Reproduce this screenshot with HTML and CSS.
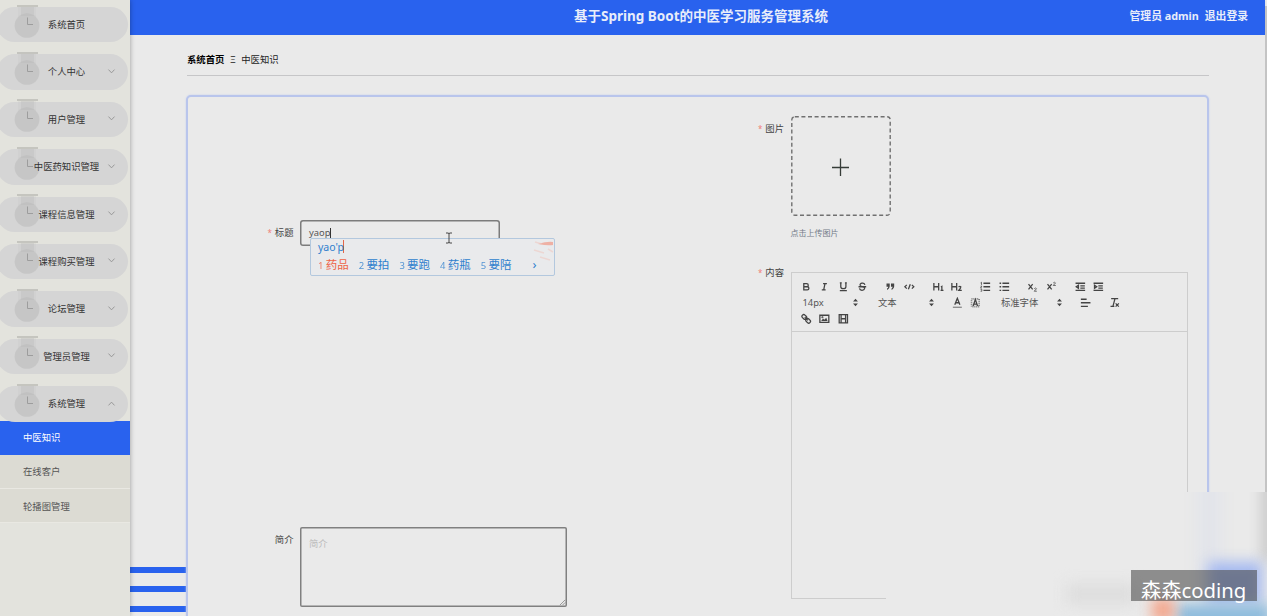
FILE: index.html
```html
<!DOCTYPE html>
<html lang="zh-CN">
<head>
<meta charset="utf-8">
<title>基于Spring Boot的中医学习服务管理系统</title>
<link rel="stylesheet" href="styles.css">
</head>
<body>
<svg class="defs" aria-hidden="true">
  <symbol id="medal" viewBox="0 0 30 36">
    <path d="M6 3H24V14Q29 18 27 25Q25 32 18 33.500H12Q5 31 3 25Q1.500 18 6 14Z" fill="#b5b5b5" opacity=".14"/>
    <path d="M9 3H22V12L9 12Z" fill="#b5b5b5" opacity=".3"/>
    <circle cx="15" cy="21.500" r="12.300" fill="#b5b5b5" opacity=".36"/>
    <path d="M5 2H26" stroke="#bdbdb8" stroke-width="1.600"/>
    <path d="M15.500 13.500V20.500H21" stroke="#9d9d9d" fill="none"/>
  </symbol>
  <symbol id="arrow" viewBox="0 0 8 8"><path d="M1.300 2.300L4 5.200L6.700 2.300" fill="none" stroke="#929292" stroke-width=".8"/></symbol>
  <symbol id="updown" viewBox="0 0 18 18"><path d="M5 7.500L9 3L13 7.500ZM5 10.500L9 15L13 10.500Z" fill="#444"/></symbol>
</svg>
<div class="app">
  <aside class="sidebar">
    <nav class="menu">
      <a class="item"><svg class="medal"><use href="#medal"/></svg><span>系统首页</span></a>
      <a class="item"><svg class="medal"><use href="#medal"/></svg><span>个人中心</span><svg class="chev"><use href="#arrow"/></svg></a>
      <a class="item"><svg class="medal"><use href="#medal"/></svg><span>用户管理</span><svg class="chev"><use href="#arrow"/></svg></a>
      <a class="item"><svg class="medal"><use href="#medal"/></svg><span>中医药知识管理</span><svg class="chev"><use href="#arrow"/></svg></a>
      <a class="item"><svg class="medal"><use href="#medal"/></svg><span>课程信息管理</span><svg class="chev"><use href="#arrow"/></svg></a>
      <a class="item"><svg class="medal"><use href="#medal"/></svg><span>课程购买管理</span><svg class="chev"><use href="#arrow"/></svg></a>
      <a class="item"><svg class="medal"><use href="#medal"/></svg><span>论坛管理</span><svg class="chev"><use href="#arrow"/></svg></a>
      <a class="item"><svg class="medal"><use href="#medal"/></svg><span>管理员管理</span><svg class="chev"><use href="#arrow"/></svg></a>
      <a class="item"><svg class="medal"><use href="#medal"/></svg><span>系统管理</span><svg class="chev open"><use href="#arrow"/></svg></a>
    </nav>
    <div class="submenu">
      <a class="sub active">中医知识</a>
      <a class="sub">在线客户</a>
      <a class="sub">轮播图管理</a>
    </div>
  </aside>
  <div class="page">
    <header class="header">
      <h1 class="title">基于Spring Boot的中医学习服务管理系统</h1>
      <div class="user"><span>管理员 admin</span><span>退出登录</span></div>
    </header>
    <main class="main">
      <div class="crumbs"><b>系统首页</b><span class="sep">Ξ</span><span>中医知识</span></div>
      <form class="card">
        <div class="col">
          <div class="field field-title">
            <label class="label"><i class="req">*</i>标题</label>
            <div class="input">yaop<span class="caret"></span>
              <div class="ime">
                <div class="ime-text">yao'p</div>
                <div class="ime-list">
                  <span class="first"><small>1</small>药品</span><span><small>2</small>要拍</span><span><small>3</small>要跑</span><span><small>4</small>药瓶</span><span><small>5</small>要陪</span><span class="next">›</span>
                </div>
                <svg class="ime-art" viewBox="0 0 24 26"><path d="M8 5Q18 2 23 3V6Q18 7 8 5Z" fill="#eeb0a4"/><path d="M4 11L14 14M10 18L20 21M18 10L23 13M5 3L12 5" stroke="#f0c4bb" stroke-width="1.500" opacity=".5"/></svg>
              </div>
              <svg class="ibeam" viewBox="0 0 8 12"><path d="M1 1H3Q4 1 4 2Q4 1 5 1H7M4 2V10M1 11H3Q4 11 4 10Q4 11 5 11H7" fill="none" stroke="#333" stroke-width=".9"/></svg>
            </div>
          </div>
          <div class="field">
            <label class="label">简介</label>
            <div class="textarea">简介<svg class="grip" viewBox="0 0 8 8"><path d="M1 7L7 1M4 7L7 4" stroke="#777" stroke-width=".8"/></svg></div>
          </div>
        </div>
        <div class="col">
          <div class="field field-image">
            <label class="label"><i class="req">*</i>图片</label>
            <div>
              <div class="upload"><svg class="dash" viewBox="0 0 100 100"><rect x=".8" y=".8" width="98.400" height="98.400" rx="3" fill="none" stroke="#707070" stroke-width="1.400" stroke-dasharray="4 2.600"/><path d="M49.500 42.500V60M41 51.500H58" stroke="#363c38" stroke-width="1.300"/></svg></div>
              <div class="tip">点击上传图片</div>
            </div>
          </div>
          <div class="field">
            <label class="label label-body"><i class="req">*</i>内容</label>
            <div class="editor">
              <div class="toolbar">
                <div class="row">
                  <div class="group">
                    <svg class="ico" viewBox="0 0 18 18"><path d="M5 4H9.500A2.500 2.500 0 0 1 9.500 9H5ZM5 9H10.500A2.500 2.500 0 0 1 10.500 14H5Z"/></svg>
                    <svg class="ico" viewBox="0 0 18 18"><path d="M7 4H13M5 14H11M8 14L10 4"/></svg>
                    <svg class="ico" viewBox="0 0 18 18"><path d="M5 3V9Q5 12 9 12Q13 12 13 9V3M3.500 3H6.500M11.500 3H14.500M3.500 15H14.500"/></svg>
                    <svg class="ico" viewBox="0 0 18 18"><path d="M13 6Q12 3 8.500 3.500Q5 4 5.500 6.500Q6 8.500 9 9Q13 9.500 12.500 12Q12 14.500 8.500 14.500Q5 14 4.500 11.500M3 9H15"/></svg>
                  </div>
                  <div class="group">
                    <svg class="ico" viewBox="0 0 18 18"><path d="M4 5H7V8H4ZM7 8Q7 12 4 13M11 5H14V8H11ZM14 8Q14 12 11 13" fill="#444"/></svg>
                    <svg class="ico" viewBox="0 0 18 18"><path d="M5 6L2 9L5 12M13 6L16 9L13 12M10.500 5L7.500 13"/></svg>
                  </div>
                  <div class="group">
                    <svg class="ico" viewBox="0 0 18 18"><path d="M2 3V15M9.500 3V15M2 9H9.500M13 9.500L14.500 8.500V14.500M12.500 14.500H17"/></svg>
                    <svg class="ico" viewBox="0 0 18 18"><path d="M2 3V15M9.500 3V15M2 9H9.500M12.500 9.500Q14.500 7.500 16 9Q16.500 10.500 13 14.500H17.500"/></svg>
                  </div>
                  <div class="group">
                    <svg class="ico" viewBox="0 0 18 18"><path d="M6 3.500H16.500M6 9H16.500M6 14.500H16.500"/><path class="thin" d="M1.500 3L3 2V6M1.500 8H3.500L1.500 11H3.500M1.500 13H3.500V16H1.500"/></svg>
                    <svg class="ico" viewBox="0 0 18 18"><path d="M6 3.500H16.500M6 9H16.500M6 14.500H16.500M1.500 3.500H4M1.500 9H4M1.500 14.500H4"/></svg>
                  </div>
                  <div class="group">
                    <svg class="ico" viewBox="0 0 18 18"><path d="M3 5L9.500 13M9.500 5L3 13"/><path class="thin" d="M12 12Q14 10 15.500 12L12 16H16"/></svg>
                    <svg class="ico" viewBox="0 0 18 18"><path d="M3 5L9.500 13M9.500 5L3 13"/><path class="thin" d="M12 3Q14 1 15.500 3L12 7H16"/></svg>
                  </div>
                  <div class="group">
                    <svg class="ico" viewBox="0 0 18 18"><path d="M1.500 3.500H16.500M1.500 14.500H16.500M9 7.500H16M9 11H16M6 6.500V11.500L2.500 9Z"/></svg>
                    <svg class="ico" viewBox="0 0 18 18"><path d="M1.500 3.500H16.500M1.500 14.500H16.500M9 7.500H16M9 11H16M3 6.500V11.500L6.500 9Z"/></svg>
                  </div>
                </div>
                <div class="row">
                  <div class="picker">14px<svg class="ud"><use href="#updown"/></svg></div>
                  <div class="picker">文本<svg class="ud"><use href="#updown"/></svg></div>
                  <div class="group">
                    <svg class="ico" viewBox="0 0 18 18"><path d="M5 12L9 2L13 12M6.500 9H11.500"/><path class="thin" d="M2 16H16"/></svg>
                    <svg class="ico" viewBox="0 0 18 18"><rect x="3" y="3" width="12" height="12" class="dots"/><path d="M5.500 14L9 4L12.500 14M7 11H11"/></svg>
                  </div>
                  <div class="picker picker-font">标准字体<svg class="ud"><use href="#updown"/></svg></div>
                  <div class="group"><svg class="ico" viewBox="0 0 18 18"><path d="M2 3.500H11M2 9H17M2 14.500H13"/></svg></div>
                  <div class="group"><svg class="ico" viewBox="0 0 18 18"><path d="M4 2.500H15M10 2.500L7 14M3 14.500H9M11 10L16 15M16 10L11 15"/></svg></div>
                </div>
                <div class="row">
                  <div class="group">
                    <svg class="ico" viewBox="0 0 18 18"><rect x="2" y="3.500" width="8" height="5.500" rx="2.700" transform="rotate(45 6 6)"/><rect x="8" y="9.500" width="8" height="5.500" rx="2.700" transform="rotate(45 12 12)"/><path d="M6.500 6.500L11.500 11.500"/></svg>
                    <svg class="ico" viewBox="0 0 18 18"><path d="M2 3.500H16V14.500H2Z"/><path d="M4 12.500L7 8.500L9 10.500L12 7.500L14 12.500Z" fill="#444" stroke="none"/><circle cx="6" cy="6.500" r=".6"/></svg>
                    <svg class="ico" viewBox="0 0 18 18"><path d="M2.500 2.500H15.500V15.500H2.500ZM5.500 3V15M12.500 3V15M5.500 9H12.500"/></svg>
                  </div>
                </div>
              </div>
              <div class="editor-body"></div>
            </div>
          </div>
        </div>
      </form>
    </main>
  </div>
  <div class="scroll"></div>
</div>
<div class="haze"><i class="h-line"></i><i class="h-edge"></i><i class="h-blue"></i><i class="h-grey"></i><i class="h-cyan"></i><i class="h-orange"></i></div>
<div class="watermark">森森coding</div>
</body>
</html>
```
FILE: styles.css
```css
* { box-sizing: border-box; }
body {
  margin: 0;
  width: 1267px;
  height: 616px;
  overflow: hidden;
  position: relative;
  background: #eaeaea;
  color: #333;
  font: 9.35px/1.2 "Noto Sans", "Noto Sans CJK SC", sans-serif;
}
svg { display: block; }
i { font-style: normal; }
.defs { position: absolute; width: 0; height: 0; }
.app { display: flex; height: 616px; }

.sidebar {
  flex: none;
  width: 130px;
  background: #e3e3dd;
  box-shadow: 0 0 5px rgba(0, 0, 0, .35);
  z-index: 1;
}
.menu {
  display: flex;
  flex-direction: column;
  gap: 12px;
  padding-top: 7px;
}
.item {
  position: relative;
  display: flex;
  align-items: center;
  justify-content: center;
  width: 131px;
  height: 35.4px;
  margin-left: -3px;
  padding-left: 8px;
  border-radius: 18px;
  background: #d5d5d5;
  color: #333;
}
.item span { position: relative; }
.medal { position: absolute; left: 15px; top: -3.500px; width: 30px; height: 36px; }
.chev { position: absolute; right: 12.500px; top: 12.500px; width: 9px; height: 9px; }
.chev.open { transform: rotate(180deg); }
.submenu { margin-top: -.6px; }
.sub {
  display: flex;
  align-items: center;
  height: 34.200px;
  padding: 1px 0 0 23px;
  background: #dcdbd3;
  border-bottom: 1px solid #e9e8e2;
  color: #555;
}
.sub.active { height: 34px; padding-top: 0; background: #2962ee; color: #fff; border: 0; }

.page { flex: 1; min-width: 0; display: flex; flex-direction: column; }
.scroll { flex: none; width: 2px; margin-top: 6px; background: #c4c4c4; }
.header {
  flex: none;
  height: 35px;
  display: grid;
  grid-template-columns: 1fr auto 1fr;
  padding: 0 17px 2px 24px;
  align-items: center;
  background: #2962ee;
  box-shadow: 0 1px 1px #bcd3ec;
  color: #e8edfa;
  font-weight: 700;
}
.title { grid-column: 2; margin: 0; font-size: 13.500px; white-space: nowrap; }
.user { display: flex; justify-content: flex-end; gap: 6px; font-size: 10.800px; white-space: nowrap; }
.main {
  flex: 1;
  min-height: 0;
  overflow: hidden;
  padding: 0 56px;
  background:
    linear-gradient(#2962ee, #2962ee) 0 532px / 100% 6px no-repeat,
    linear-gradient(#2962ee, #2962ee) 0 551px / 100% 6px no-repeat,
    linear-gradient(#2962ee, #2962ee) 0 571px / 100% 6px no-repeat,
    #eaeaea;
}
.crumbs {
  display: flex;
  align-items: center;
  gap: 5.500px;
  height: 41px;
  margin: 0 0 19px 1px;
  padding-top: 10px;
  border-bottom: 1px solid #c6c6c8;
  color: #222;
}
.crumbs b { color: #000; }
.card {
  height: 640px;
  display: grid;
  grid-template-columns: 490.500px 1fr;
  border: 2px solid #b9c5ec;
  border-radius: 5px;
  background: #eaeaea;
  box-shadow: 0 0 2px #c3cdf0;
}
.field { display: flex; }
.label { flex: none; width: 105.500px; text-align: right; color: #444; line-height: 26px; }
.req { color: #f08078; margin-right: 3px; font-size: 8px; }
.label + * { margin-left: 6.500px; }
.field-title { margin-top: 123px; height: 307px; }
.input {
  position: relative;
  width: 200px;
  height: 26px;
  box-shadow: inset 0 0 0 1.500px #7c7c7c;
  border-radius: 3px;
  padding-left: 9px;
  line-height: 25px;
  color: #555;
}
.caret { display: inline-block; width: 1px; height: 10px; background: #333; vertical-align: -2px; }
.ibeam { position: absolute; left: 145px; top: 12px; width: 8px; height: 12px; }
.ime {
  position: absolute;
  left: 10px;
  top: 18px;
  width: 245px;
  height: 38px;
  padding: 0 7px;
  border: 1px solid #b3c8de;
  border-radius: 2px;
  background: #e9eaec;
  color: #2f7fce;
  white-space: nowrap;
}
.ime-text { width: 26px; height: 13px; margin-top: 1px; border-right: 1px solid #e2664a; font-size: 10.500px; line-height: 14px; }
.ime-list { display: flex; gap: 10px; font-size: 11.500px; line-height: 23px; }
.ime-list small { display: inline-block; width: 7.700px; font-size: 9.500px; opacity: .8; }
.ime-list .first { color: #ee6347; }
.ime-list .next { margin-left: 11px; font-size: 13px; line-height: 22px; }
.ime-art { position: absolute; right: 0; top: 0; width: 24px; height: 26px; }
.textarea {
  position: relative;
  width: 266.500px;
  height: 80px;
  box-shadow: inset 0 0 0 1.500px #808080;
  border-radius: 2px;
  padding: 11px 9px;
  color: #bbb;
}
.grip { position: absolute; right: 1px; bottom: 1px; width: 7px; height: 7px; }
.field-image { margin-top: 19px; height: 156px; }
.upload, .dash { width: 100px; height: 100px; }
.tip { margin-top: 12px; font-size: 8px; color: #737a88; }
.label-body { height: 12px; line-height: 12px; margin-top: -5px; }
.label-body + .editor { margin-top: 0; }
.editor { width: 397.500px; height: 327px; border: 1px solid #cdcdcd; }
.toolbar { height: 59px; padding: 5.500px 5px 5px; border-bottom: 1px solid #cdcdcd; }
.row { display: flex; gap: 10px; height: 16px; align-items: center; }
.group { display: flex; }
.ico {
  width: 18.700px;
  height: 11.500px;
  fill: none;
  stroke: #444;
  stroke-width: 2;
}
.ico .thin { stroke-width: 1.200; }
.ico .dots { stroke: #777; stroke-width: 2.500; stroke-dasharray: 1.500 1.500; }
.picker {
  display: flex;
  align-items: center;
  justify-content: space-between;
  width: 65.500px;
  padding: 0 1px 0 6px;
  color: #555;
}
.picker-font { width: 71.500px; }
.ud { width: 11px; height: 11px; }

.haze {
  position: absolute;
  left: 886px;
  top: 492px;
  width: 381px;
  height: 124px;
  overflow: hidden;
  background: #eaeaea;
}
.haze i { position: absolute; filter: blur(7px); }
.h-line { left: 311px; top: -20px; width: 24px; height: 160px; background: #e2e4ea; }
.h-edge { left: 377px; top: -20px; width: 10px; height: 90px; background: #bdbdbd; }
.h-blue { left: 322px; top: 70px; width: 54px; height: 42px; background: #a3b8f0; }
.h-grey { left: 180px; top: 91px; width: 70px; height: 22px; background: #dedede; }
.h-cyan { left: 290px; top: 112px; width: 95px; height: 26px; background: #8dbbdc; }
.h-orange { left: 266px; top: 106px; width: 22px; height: 24px; background: #f3a48a; }
.watermark {
  position: absolute;
  left: 1131px;
  top: 570px;
  width: 126px;
  height: 31px;
  padding-left: 10px;
  background: rgba(70, 70, 70, .57);
  color: #fff;
  font-size: 20.300px;
  line-height: 40px;
  white-space: nowrap;
}
```
